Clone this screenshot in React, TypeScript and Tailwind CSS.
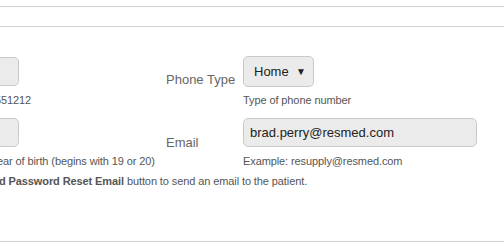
import React from 'react';

const box = 'rounded-[5px] border border-[#cacaca] bg-[#ebebeb]';
const hint = 'text-[11px] leading-[13px] tracking-[-0.1px] text-[#555] whitespace-nowrap';

const App: React.FC = () => {
  return (
    <div className="w-[504px] h-[246px] overflow-hidden bg-white font-['Liberation_Sans',Arial,sans-serif]">
      {/* Header rules */}
      <div className="h-[6px]" />
      <div className="h-[20px] border-t border-[#cfcfcf]" />
      <div className="border-t border-[#cfcfcf]" />

      <div className="pt-[29px]">
        {/* Phone row */}
        <div className="flex items-start">
          <div className="w-[166px] shrink-0">
            <div className="h-[31px] pt-[1px]">
              <div className={`h-[29px] w-[40px] -ml-[21px] ${box}`} />
            </div>
            <p className={`mt-[7px] -ml-[5px] ${hint}`}>551212</p>
          </div>
          <label className="w-[77px] shrink-0 pt-[16px] text-[13px] leading-[15px] text-[#666]">Phone Type</label>
          <div>
            <div className={`flex h-[31px] w-[71px] items-center justify-between pl-[10px] pr-[7px] ${box}`}>
              <span className="text-[13px] leading-[15px] text-[#222]">Home</span>
              <span className="text-[10px] leading-none text-[#222]">▼</span>
            </div>
            <p className={`mt-[7px] ${hint}`}>Type of phone number</p>
          </div>
        </div>

        {/* Email row */}
        <div className="mt-[10px] flex items-start">
          <div className="w-[166px] shrink-0">
            <div className="h-[31px] pt-[1px]">
              <div className={`h-[29px] w-[40px] -ml-[21px] ${box}`} />
            </div>
            <p className={`mt-[7px] -ml-[3px] ${hint}`}>ear of birth (begins with 19 or 20)</p>
          </div>
          <label className="w-[77px] shrink-0 pt-[18px] text-[13px] leading-[15px] text-[#666]">Email</label>
          <div>
            <div className="h-[31px] pt-[1px]">
              <div className={`flex h-[29px] w-[234px] items-center px-[6px] ${box}`}>
                <span className="text-[13px] leading-[15px] text-[#222]">brad.perry@resmed.com</span>
              </div>
            </div>
            <p className={`mt-[7px] ${hint}`}>Example: resupply@resmed.com</p>
          </div>
        </div>

        <p className={`mt-[7px] -ml-[1px] ${hint} text-[#444]`}>
          <b>d Password Reset Email</b> button to send an email to the patient.
        </p>
      </div>

      <div className="mt-[53px] border-t border-[#cfcfcf]" />
    </div>
  );
};

export default App;
